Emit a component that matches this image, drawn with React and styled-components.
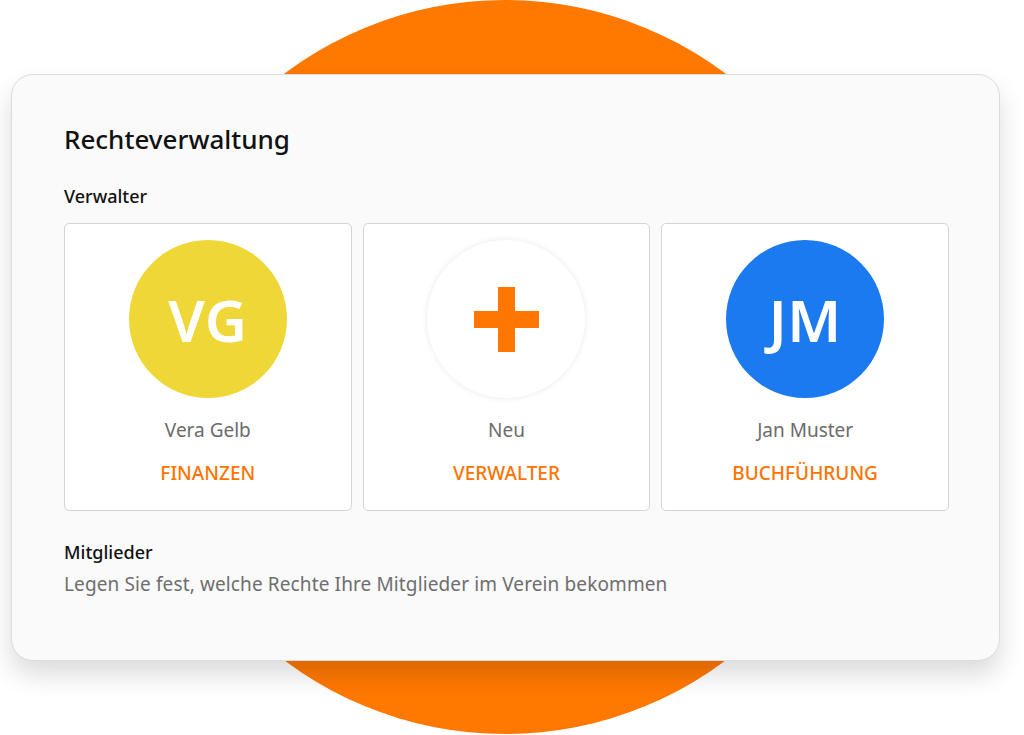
import React from 'react';
import styled, { createGlobalStyle } from 'styled-components';

const GlobalStyle = createGlobalStyle`
	html, body {
		margin: 0;
		padding: 0;
		background: #ffffff;
		font-family: 'Noto Sans', 'Open Sans', sans-serif;
	}
	* {
		box-sizing: border-box;
	}
`;

const people = [
	{ id: 'vg', initials: 'VG', name: 'Vera Gelb', role: 'Finanzen', color: '#eed736' },
	{ id: 'new', name: 'Neu', role: 'Verwalter', add: true },
	{ id: 'jm', initials: 'JM', name: 'Jan Muster', role: 'Buchführung', color: '#1b7aef' },
];

const PlusIcon = () => (
	<svg width='65' height='65' viewBox='0 0 65 65'>
		<rect x='24' y='0' width='17' height='65' fill='#ff7700' />
		<rect x='0' y='24' width='65' height='17' fill='#ff7700' />
	</svg>
);

const App = () => {
	return (
		<>
			<GlobalStyle />
			<Stage>
				<Sun />
				<Panel>
					<Title>Rechteverwaltung</Title>
					<SectionLabel $top={24}>Verwalter</SectionLabel>
					<Grid>
						{people.map((p) => (
							<Tile key={p.id}>
								<Avatar $color={p.color} $add={p.add}>
									{p.add ? <PlusIcon /> : p.initials}
								</Avatar>
								<Name>{p.name}</Name>
								<Role>{p.role}</Role>
							</Tile>
						))}
					</Grid>
					<Members>
						<SectionLabel>Mitglieder</SectionLabel>
						<Hint>Legen Sie fest, welche Rechte Ihre Mitglieder im Verein bekommen</Hint>
					</Members>
				</Panel>
			</Stage>
		</>
	);
};

export default App;

const Stage = styled.main`
	position: relative;
	width: 1024px;
	height: 735px;
	overflow: hidden;
	padding: 74px 0 0 11px;
`;

const Sun = styled.div`
	position: absolute;
	left: 138px;
	top: 0;
	width: 734px;
	height: 734px;
	border-radius: 50%;
	background: #ff7800;
`;

const Panel = styled.section`
	position: relative;
	width: 989px;
	height: 587px;
	background: #fafafa;
	border: 1px solid #dcdcdc;
	border-radius: 22px;
	box-shadow: 0 14px 26px rgba(0, 0, 0, 0.14);
	padding: 44px 50px 0 52px;
	display: flex;
	flex-direction: column;
`;

const Title = styled.h1`
	margin: 0;
	font-size: 26px;
	font-weight: 500;
	color: #111;
	line-height: 40px;
`;

const SectionLabel = styled.h2`
	margin: ${(p) => p.$top || 0}px 0 0;
	font-size: 18px;
	font-weight: 500;
	color: #111;
	line-height: 26px;
`;

const Grid = styled.div`
	display: grid;
	grid-template-columns: repeat(3, 1fr);
	width: 885px;
	gap: 11px;
	margin-top: 14px;
`;

const Tile = styled.div`
	height: 288px;
	background: #ffffff;
	border: 1px solid #d4d4d4;
	border-radius: 5px;
	display: flex;
	flex-direction: column;
	align-items: center;
	padding-top: 16px;
`;

const Avatar = styled.div`
	width: 158px;
	height: 158px;
	border-radius: 50%;
	background: ${(p) => (p.$add ? '#ffffff' : p.$color)};
	box-shadow: ${(p) => (p.$add ? '0 0 6px rgba(0, 0, 0, 0.09)' : 'none')};
	display: flex;
	align-items: center;
	justify-content: center;
	color: #ffffff;
	font-size: 58px;
	font-weight: 600;
	letter-spacing: 0.5px;
`;

const Name = styled.div`
	margin-top: 18px;
	font-size: 19px;
	color: #6b6b6b;
	line-height: 28px;
`;

const Role = styled.div`
	margin-top: 15px;
	font-size: 19px;
	font-weight: 500;
	color: #ff7300;
	text-transform: uppercase;
	line-height: 28px;
`;

const Members = styled.div`
	margin-top: 28px;
	display: flex;
	flex-direction: column;
	gap: 6px;
`;

const Hint = styled.p`
	margin: 0;
	font-size: 19px;
	letter-spacing: 0.12px;
	color: #6e6e6e;
	line-height: 26px;
`;
